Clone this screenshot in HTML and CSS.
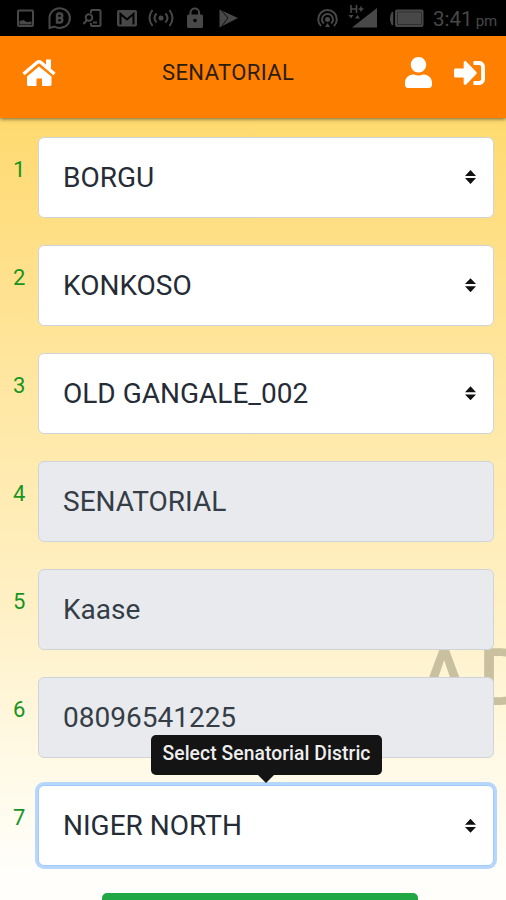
FILE: index.html
```html
<!DOCTYPE html>
<html lang="en">
<head>
<meta charset="utf-8">
<title>Senatorial</title>
<link rel="stylesheet" href="styles.css">
</head>
<body>
<div class="status">
  <svg class="notifications" width="230" height="36" viewBox="0 0 230 36" fill="none" stroke="#484848" stroke-width="2">
    <rect x="18" y="10.500" width="15" height="15.500" rx="1"/>
    <path d="M19.500 24.500v-3.500l4-1 3 2 5-.5v3z" fill="#484848" stroke="none"/>
    <path d="M49.500 28v-10a10.200 9.800 0 1 1 5 8.500z"/>
    <path d="M57 13.500v9h3.500a2.300 2.300 0 0 0 0-4.500H57m0-4.500h3a2.200 2.200 0 0 1 0 4.500" stroke-width="2.400"/>
    <path d="M91 13v-2q0-1 1-1h7q1.500 0 1.500 1.500v13q0 1.500-1.500 1.500h-7q-1 0-1-1v-2"/>
    <circle cx="89" cy="17.500" r="3.300"/><path d="m87 20-3.500 4M93 22.500h4"/>
    <rect x="117" y="10" width="20" height="16.500" rx="2" fill="#484848" stroke="none"/>
    <path d="M120.500 24.500V14l6.500 5.500 6.500-5.500v10.500" stroke="#000"/>
    <circle cx="161" cy="18" r="2.500" fill="#484848" stroke="none"/>
    <path d="M156.500 13.500q-4 4.500 0 9M165.500 13.500q4 4.500 0 9M152.500 10q-6 8 0 16M169.500 10q6 8 0 16"/>
    <rect x="187" y="14.500" width="16" height="13.500" rx="1.500" fill="#484848" stroke="none"/>
    <path d="M190.500 15v-2.500a4.300 4 0 0 1 8.600 0V15"/><circle cx="195" cy="20.500" r="1.800" fill="#000" stroke="none"/>
    <path d="M219.500 9.500 238 18l-18.500 9.500z" fill="#484848" stroke="none"/>
    <path d="m221 10 7 8-7 9" stroke="#111" stroke-width="1"/>
  </svg>
  <svg class="signals" width="110" height="36" viewBox="314 0 110 36" fill="none" stroke="#484848" stroke-width="2">
    <circle cx="327.500" cy="19.500" r="2.500" fill="#484848" stroke="none"/>
    <path d="M323.800 23.500a5.500 5.500 0 1 1 7.400 0M321 26a9.300 9.300 0 1 1 13 0" />
    <path d="M325 27l2.500-4 2.500 4z" fill="#484848" stroke="none"/>
    <path d="M352 27.500 377 8v19.500z" fill="#484848" stroke="none"/>
    <path d="M351 5v8m5.500-8v8M351 9h5.500m2 0h5m-2.500-2.500v5" stroke-width="1.600"/>
    <path d="m348.500 15 2.500 3.500 2.500-3.500zm6.500 3.500 2.500-3.500 2.500 3.500z" fill="#484848" stroke="none"/>
    <path d="M392.500 12v13q-3.500-6.500 0-13z" fill="#484848" stroke-width="1.500"/>
    <rect x="395" y="9.500" width="28.500" height="17.500" rx="2" fill="#484848" stroke="none"/>
    <path d="M397.500 12h24v12.500h-24z" stroke="#303030" stroke-width="1"/>
  </svg>
  <div class="clock">3:41 <small>pm</small></div>
</div>
<header class="bar">
  <svg class="home" width="36" height="30" viewBox="0 0 36 30" fill="#fff">
    <path d="M25 1.500h5v11l-5-4.500z"/>
    <path d="M18 8.500 30.500 18.500v8q0 1.500-1.500 1.500h-8v-7.500h-5.500V28h-8Q6 28 6 26.500v-8z"/>
    <path d="M2.500 16 16 4.500q2-1.600 4 0L33.500 16" fill="none" stroke="#fff" stroke-width="3.400"/>
  </svg>
  <h1>SENATORIAL</h1>
  <svg class="user" width="27" height="31" viewBox="0 0 448 512" preserveAspectRatio="none" fill="#fff"><path d="M224 256c70.700 0 128-57.300 128-128S294.700 0 224 0 96 57.300 96 128s57.300 128 128 128zm89.600 32h-16.700c-22.200 10.200-46.900 16-72.900 16s-50.600-5.800-72.900-16h-16.700C60.200 288 0 348.200 0 422.400V464c0 26.500 21.500 48 48 48h352c26.500 0 48-21.500 48-48v-41.600c0-74.200-60.200-134.400-134.400-134.400z"/></svg>
  <svg class="login" width="31" height="24" viewBox="0 64 512 384" preserveAspectRatio="none" fill="#fff"><path d="M416 448h-84c-6.600 0-12-5.400-12-12v-40c0-6.600 5.400-12 12-12h84c17.700 0 32-14.300 32-32V160c0-17.700-14.300-32-32-32h-84c-6.600 0-12-5.400-12-12V76c0-6.600 5.400-12 12-12h84c53 0 96 43 96 96v192c0 53-43 96-96 96zm-47-209L201 71c-15-15-41-4.500-41 17v96H24c-13.300 0-24 10.700-24 24v96c0 13.300 10.700 24 24 24h136v96c0 21.500 26 32 41 17l168-168c9.300-9.400 9.300-24.600 0-34z"/></svg>
</header>
<main class="form">
  <div class="watermark">AD</div>
  <div class="row"><label>1</label><div class="field">BORGU<i class="sort"></i></div></div>
  <div class="row"><label>2</label><div class="field">KONKOSO<i class="sort"></i></div></div>
  <div class="row"><label>3</label><div class="field">OLD GANGALE_002<i class="sort"></i></div></div>
  <div class="row"><label>4</label><div class="field locked">SENATORIAL</div></div>
  <div class="row"><label>5</label><div class="field locked">Kaase</div></div>
  <div class="row"><label>6</label><div class="field locked">08096541225</div></div>
  <div class="row"><label>7</label><div class="field focused">NIGER NORTH<i class="sort"></i><div class="tip">Select Senatorial Distric</div></div></div>
  <div class="submit"></div>
</main>
</body>
</html>
```
FILE: styles.css
```css
* { box-sizing: border-box; }
body {
  margin: 0;
  height: 900px;
  overflow: hidden;
  display: flex;
  flex-direction: column;
  font-family: Roboto, sans-serif;
}
.status {
  height: 36px;
  flex: none;
  display: flex;
  background: #000;
  color: #484848;
}
.notifications { overflow: visible; }
.signals { margin-left: 84px; }
.clock {
  margin-left: 9px;
  font-size: 20.5px;
  line-height: 38px;
  white-space: nowrap;
}
.clock small { font-size: 15px; margin-left: -2px; }
.bar {
  height: 81.5px;
  flex: none;
  display: flex;
  align-items: center;
  padding: 0 21px 8px 21px;
  background: #ff8000;
  box-shadow: 0 1px 4px rgba(0, 0, 0, .55);
  position: relative;
  z-index: 1;
}
.bar h1 {
  margin: 0 0 0 105px;
  font-size: 22px;
  font-weight: 400;
  line-height: 30px;
  letter-spacing: .4px;
  color: #2b1c0d;
}
.home { margin-top: 1px; }
.user { margin-left: auto; }
.login { margin-left: 22px; }
.form {
  flex: 1;
  min-height: 0;
  overflow: hidden;
  position: relative;
  padding: 19px 12px 0 13px;
  background: linear-gradient(#ffda70 0, #ffe08a 18%, #ffe8a6 37%, #fff0c4 62%, #fff9e5 82%, #fffefb 97%);
}
.row {
  display: flex;
  position: relative;
  height: 81px;
  margin-bottom: 27.150px;
}
.row label {
  width: 25px;
  padding-top: 18px;
  font-size: 22px;
  line-height: 30px;
  color: #17951f;
}
.field {
  flex: 1;
  position: relative;
  display: flex;
  align-items: center;
  justify-content: space-between;
  padding: 0 17px 0 24px;
  border: 1px solid #ced4da;
  border-radius: 6px;
  background: #fff;
  color: #252c36;
  font-size: 28px;
}
.locked { background: #e8eaee; color: #353d47; }
.focused { border-color: #a0cbfb; box-shadow: 0 0 0 3px #b6d7fb; }
.sort {
  width: 11px;
  height: 14px;
  background: #111;
  clip-path: polygon(50% 0, 100% 42%, 0 42%, 0 58%, 100% 58%, 50% 100%, 0 58%, 0 42%);
}
.tip {
  position: absolute;
  left: 112px;
  top: -51px;
  width: 231px;
  height: 40px;
  border-radius: 5px;
  background: #141414;
  color: #eee;
  font-size: 19.3px;
  font-weight: 500;
  letter-spacing: .07px;
  line-height: 37px;
  text-align: center;
  white-space: nowrap;
}
.tip::after {
  content: "";
  position: absolute;
  left: 107px;
  top: 40px;
  border: 8px solid transparent;
  border-top-color: #141414;
  border-bottom: 0;
}
.watermark {
  position: absolute;
  left: 418px;
  top: 486px;
  width: 88px;
  overflow: hidden;
  font-size: 79px;
  font-weight: 500;
  letter-spacing: 8px;
  line-height: 148px;
  height: 130px;
  color: #c9c09f;
}
.submit {
  width: 316px;
  height: 60px;
  margin-left: 89px;
  border-radius: 5px;
  background: #22a745;
}
```
